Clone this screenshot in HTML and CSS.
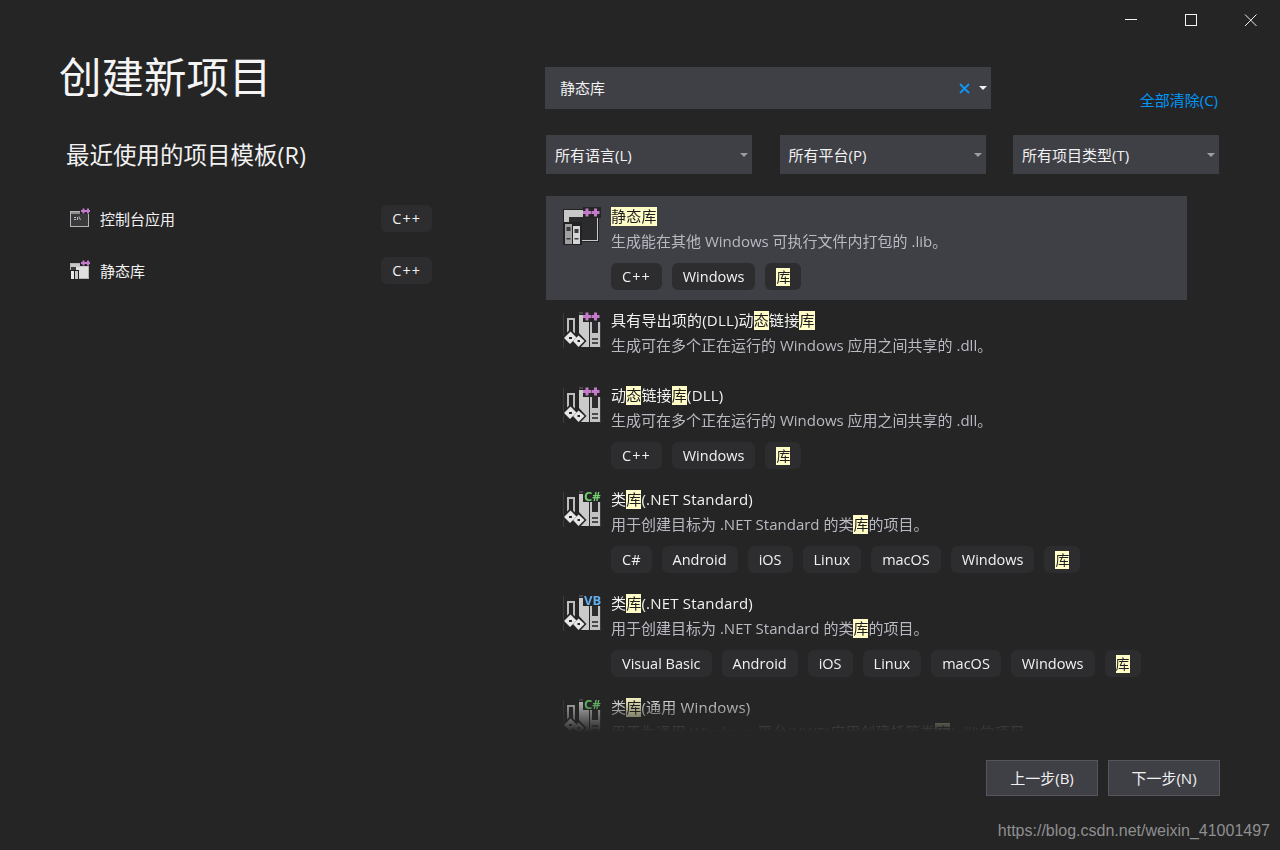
FILE: index.html
```html
<!DOCTYPE html>
<html lang="zh-CN">
<head>
<meta charset="utf-8">
<title>创建新项目</title>
<link rel="stylesheet" href="styles.css">
</head>
<body>
<svg class="defs" width="0" height="0" aria-hidden="true">
  <defs>
    <symbol id="plus2" viewBox="0 0 40 40">
      <rect x="22" y="2" width="18" height="11" fill="#252526"/>
      <path d="M24.500 3.500h3v2.500h2.500v3h-2.500v2.500h-3v-2.500H22v-3h2.500zM33 3.500h3v2.500h2.500v3H36v2.500h-3v-2.500h-2.500v-3H33z" fill="#c47ac8"/>
    </symbol>
    <symbol id="winlib" viewBox="0 0 40 40">
      <rect x="2" y="4" width="36" height="33" fill="#222223"/>
      <rect x="3" y="5" width="34" height="31" fill="#c8c8c8"/>
      <rect x="8" y="12" width="28" height="23" fill="#2b2b2e"/>
      <rect x="2" y="17" width="19" height="24" fill="#222223"/>
      <rect x="4" y="19" width="7" height="20" fill="#a0a0a0"/>
      <rect x="12" y="21" width="7" height="18" fill="#d4d4d4"/>
      <rect x="5.500" y="22" width="4" height="4" fill="#3a3a3c"/>
      <rect x="13.500" y="24" width="4" height="4" fill="#3a3a3c"/>
      <rect x="5.500" y="33" width="4" height="1.500" fill="#3a3a3c"/>
      <rect x="13.500" y="33" width="4" height="1.500" fill="#3a3a3c"/>
    </symbol>
    <symbol id="dll" viewBox="0 0 40 40">
      <path d="M7 10h6v14H7z" fill="none" stroke="#bdbdbd" stroke-width="2"/>
      <path d="M2.500 4v35M39.500 12v27" stroke="#3c3c3e" fill="none"/>
      <path d="M18 4h4" stroke="#6a6a6a" fill="none"/>
      <rect x="18" y="6" width="10" height="32" fill="#cacaca"/>
      <rect x="29" y="11" width="10" height="27" fill="#c2c2c2"/>
      <rect x="31" y="13" width="6" height="11" fill="#2b2b2e"/>
      <rect x="31" y="29" width="6" height="2" fill="#4a4a4c"/>
      <rect x="31" y="33" width="6" height="2" fill="#4a4a4c"/>
      <path d="M0.500 29l9-9 5.500 5.500 2.500-2 8 8.500-8 8.500-5-5-3 2.500z" fill="#252526"/>
      <path d="M3 29l6.500-6.500 6 6-6.500 6.500z" fill="#e6e6e6"/>
      <path d="M12 32l5.500-5.500 6 5.500-6 6z" fill="#e6e6e6"/>
      <path d="M8 28h3v2H8zM16.500 31h2.500v2h-2.500z" fill="#252526"/>
    </symbol>
    <symbol id="smcon" viewBox="0 0 20 20">
      <rect x="0.500" y="3.500" width="18" height="15" fill="#3a3a3c" stroke="#b5b5b5"/>
      <rect x="1" y="4" width="17" height="2" fill="#8e8e8e"/>
      <path d="M4 9h2v1H4zM4 11h2v1H4zM7 9h1v3H7zM9 8l2 4h-1L8.500 9z" fill="#bdbdbd"/>
      <rect x="10" y="0" width="10" height="6" fill="#252526"/>
      <path d="M12.500 0.500h2v1.500H16v2h-1.500v1.500h-2V4H11V2h1.500zM17 0.500h2V2h1v2h-1v1.500h-2V4h-1V2h1z" fill="#c47ac8"/>
    </symbol>
    <symbol id="smlib" viewBox="0 0 20 20">
      <rect x="0.500" y="3.500" width="18" height="15" fill="#3a3a3c" stroke="#b5b5b5"/>
      <rect x="1" y="4" width="17" height="3" fill="#c8c8c8"/>
      <rect x="6" y="7" width="12" height="11" fill="#e0e0e0"/>
      <rect x="0" y="10" width="9" height="10" fill="#1f1f20"/>
      <rect x="1" y="11" width="3" height="8" fill="#e8e8e8"/>
      <rect x="5" y="11" width="3" height="8" fill="#c8c8c8"/>
      <rect x="10" y="0" width="10" height="6" fill="#252526"/>
      <path d="M12.500 0.500h2v1.500H16v2h-1.500v1.500h-2V4H11V2h1.500zM17 0.500h2V2h1v2h-1v1.500h-2V4h-1V2h1z" fill="#c47ac8"/>
    </symbol>
  </defs>
</svg>

<div class="window">
  <header class="titlebar">
    <svg class="ctl" viewBox="0 0 13 13"><path d="M1 5.500h12" stroke="#f1f1f1"/></svg>
    <svg class="ctl" viewBox="0 0 13 13"><rect x="1.500" y="0.500" width="11" height="11" fill="none" stroke="#f1f1f1"/></svg>
    <svg class="ctl" viewBox="0 0 13 13"><path d="M1 0.500l11.500 11.500M12.500 0.500L1 12" stroke="#f1f1f1" fill="none"/></svg>
  </header>

  <main class="main">
    <section class="left">
      <h1 class="title">创建新项目</h1>
      <h2 class="recent-head">最近使用的项目模板(R)</h2>
      <ul class="recent">
        <li class="recent-row">
          <svg class="icon-sm"><use href="#smcon"/></svg>
          <span class="recent-name">控制台应用</span>
          <span class="tag tag-cpp">C++</span>
        </li>
        <li class="recent-row">
          <svg class="icon-sm"><use href="#smlib"/></svg>
          <span class="recent-name">静态库</span>
          <span class="tag tag-cpp">C++</span>
        </li>
      </ul>
    </section>

    <section class="right">
      <div class="search-row">
        <div class="search">
          <span class="search-text">静态库</span>
          <svg class="search-x" viewBox="0 0 11 11"><path d="M1 1l9 9M10 1l-9 9" stroke="#0e97f5" stroke-width="1.800" fill="none"/></svg>
          <span class="caret caret-light"></span>
        </div>
        <a class="clear">全部清除(C)</a>
      </div>

      <div class="filters">
        <div class="filter"><span>所有语言(L)</span><span class="caret"></span></div>
        <div class="filter"><span>所有平台(P)</span><span class="caret"></span></div>
        <div class="filter"><span>所有项目类型(T)</span><span class="caret"></span></div>
      </div>

      <div class="list">
        <article class="item item-selected">
          <svg class="icon"><use href="#winlib"/><use href="#plus2"/></svg>
          <div class="body">
            <div class="name"><mark>静态库</mark></div>
            <div class="desc">生成能在其他 Windows 可执行文件内打包的 .lib。</div>
            <div class="tags"><span class="tag tag-cpp">C++</span><span class="tag">Windows</span><span class="tag"><mark>库</mark></span></div>
          </div>
        </article>
        <article class="item item-notags">
          <svg class="icon"><use href="#dll"/><use href="#plus2"/></svg>
          <div class="body">
            <div class="name">具有导出项的(DLL)动<mark>态</mark>链接<mark>库</mark></div>
            <div class="desc">生成可在多个正在运行的 Windows 应用之间共享的 .dll。</div>
          </div>
        </article>
        <article class="item">
          <svg class="icon"><use href="#dll"/><use href="#plus2"/></svg>
          <div class="body">
            <div class="name">动<mark>态</mark>链接<mark>库</mark>(DLL)</div>
            <div class="desc">生成可在多个正在运行的 Windows 应用之间共享的 .dll。</div>
            <div class="tags"><span class="tag tag-cpp">C++</span><span class="tag">Windows</span><span class="tag"><mark>库</mark></span></div>
          </div>
        </article>
        <article class="item">
          <svg class="icon"><use href="#dll"/><rect x="22" y="2" width="18" height="12" fill="#252526"/><text class="badge badge-cs" x="23" y="13">C#</text></svg>
          <div class="body">
            <div class="name">类<mark>库</mark>(.NET Standard)</div>
            <div class="desc">用于创建目标为 .NET Standard 的类<mark>库</mark>的项目。</div>
            <div class="tags"><span class="tag">C#</span><span class="tag">Android</span><span class="tag">iOS</span><span class="tag">Linux</span><span class="tag">macOS</span><span class="tag">Windows</span><span class="tag"><mark>库</mark></span></div>
          </div>
        </article>
        <article class="item">
          <svg class="icon"><use href="#dll"/><rect x="22" y="2" width="18" height="12" fill="#252526"/><text class="badge badge-vb" x="23" y="13">VB</text></svg>
          <div class="body">
            <div class="name">类<mark>库</mark>(.NET Standard)</div>
            <div class="desc">用于创建目标为 .NET Standard 的类<mark>库</mark>的项目。</div>
            <div class="tags"><span class="tag">Visual Basic</span><span class="tag">Android</span><span class="tag">iOS</span><span class="tag">Linux</span><span class="tag">macOS</span><span class="tag">Windows</span><span class="tag"><mark>库</mark></span></div>
          </div>
        </article>
        <article class="item">
          <svg class="icon"><use href="#dll"/><rect x="22" y="2" width="18" height="12" fill="#252526"/><text class="badge badge-cs" x="23" y="13">C#</text></svg>
          <div class="body">
            <div class="name">类<mark>库</mark>(通用 Windows)</div>
            <div class="desc">用于为通用 Windows 平台(UWP)应用创建托管类<mark>库</mark>(.dll)的项目。</div>
          </div>
        </article>
      </div>

      <div class="actions">
        <button class="btn">上一步(B)</button>
        <button class="btn">下一步(N)</button>
      </div>
    </section>
  </main>
  <div class="watermark">https://blog.csdn.net/weixin_41001497</div>
</div>
</body>
</html>
```

FILE: styles.css
```css
* { box-sizing: border-box; }
html, body { margin: 0; padding: 0; }
body {
  width: 1280px;
  height: 850px;
  overflow: hidden;
  background: #252526;
  color: #f1f1f1;
  font-family: "Open Sans", "Noto Sans CJK SC", sans-serif;
  font-size: 15px;
}
.defs { position: absolute; }
.window { display: flex; flex-direction: column; height: 850px; }

.titlebar {
  display: flex;
  justify-content: flex-end;
  align-items: center;
  gap: 47px;
  height: 40px;
  padding-right: 23px;
}
.ctl { width: 13px; height: 13px; display: block; overflow: visible; }

.main { display: grid; grid-template-columns: 545px 1fr; flex: 1; min-height: 0; }

.left { padding: 12px 0 0 59px; }
.title { margin: 0; font-size: 42.500px; line-height: 50px; font-weight: 400; color: #f5f5f5; }
.recent-head {
  margin: 37px 0 0 7px;
  font-size: 23.500px;
  line-height: 32px;
  font-weight: 400;
}
.recent { list-style: none; margin: 21px 0 0 11px; padding: 0; width: 362px; }
.recent-row { display: flex; align-items: center; height: 52px; gap: 10px; }
.icon-sm { width: 20px; height: 20px; flex: none; }
.recent-name { flex: 1; }

.tag {
  display: inline-flex;
  align-items: center;
  height: 27px;
  padding: 0 11px;
  background: #2d2d30;
  border-radius: 6px;
  font-size: 14.500px;
  color: #f1f1f1;
  white-space: nowrap;
}
.tag-cpp { letter-spacing: 1px; }

.right { padding: 27px 0 0; display: flex; flex-direction: column; }
.search-row { display: flex; width: 673px; }
.search {
  display: flex;
  align-items: center;
  width: 446px;
  height: 42px;
  padding: 0 4px 2px 15px;
  background: #3f3f46;
}
.search-text { flex: 1; }
.search-x { width: 11px; height: 11px; margin: 2px 9px 0 0; }
.search .caret { margin-top: 2px; }
.clear {
  margin: 22px 0 0 auto;
  line-height: 22px;
  color: #0097fb;
}

.caret {
  width: 0;
  height: 0;
  border-left: 4px solid transparent;
  border-right: 4px solid transparent;
  border-top: 4px solid #9d9da3;
  flex: none;
}
.caret-light { border-top-color: #f1f1f1; }

.filters {
  display: flex;
  justify-content: space-between;
  width: 673px;
  margin: 24px 0 0 1px;
}
.filter {
  display: flex;
  justify-content: space-between;
  align-items: center;
  width: 206px;
  height: 39px;
  padding: 0 4px 0 9px;
  background: #3f3f46;
}

.list {
  display: flex;
  flex-direction: column;
  width: 641px;
  height: 536px;
  margin: 22px 0 0 1px;
  overflow: hidden;
  -webkit-mask-image: linear-gradient(#000 calc(100% - 36px), transparent);
  mask-image: linear-gradient(#000 calc(100% - 36px), transparent);
}
.item {
  display: flex;
  flex: none;
  height: 104px;
  padding: 9px 0 0 15px;
  gap: 10px;
}
.item-notags { height: 75px; }
.item-selected { background: #3f3f46; }
.icon { width: 40px; height: 40px; flex: none; overflow: visible; }
.body { padding-top: 1px; min-width: 0; }
.name { line-height: 20px; white-space: nowrap; letter-spacing: 0.200px; }
.desc { margin-top: 5px; line-height: 20px; color: #b9b9c2; white-space: nowrap; }
.tags { display: flex; gap: 10px; margin-top: 12px; }

mark {
  display: inline-block;
  background: #fffcc8;
  color: #1e1e1e;
  line-height: 19px;
}
.tag mark { line-height: 18px; font-size: 14px; }

.badge { font-family: "Open Sans", sans-serif; font-size: 13px; font-weight: 700; }
.badge-cs { fill: #6fd06f; }
.badge-vb { fill: #62aef0; }

.actions { display: flex; justify-content: flex-end; gap: 10px; width: 675px; margin-top: 28px; }
.btn {
  width: 112px;
  height: 36px;
  padding: 0 0 2px;
  background: #3f3f46;
  border: 1px solid #55555b;
  color: #f1f1f1;
  font: inherit;
}

.watermark {
  position: absolute;
  right: 10px;
  bottom: 8px;
  font-family: "Liberation Sans", sans-serif;
  font-size: 16px;
  line-height: 22px;
  color: #8f8f8f;
}
```
